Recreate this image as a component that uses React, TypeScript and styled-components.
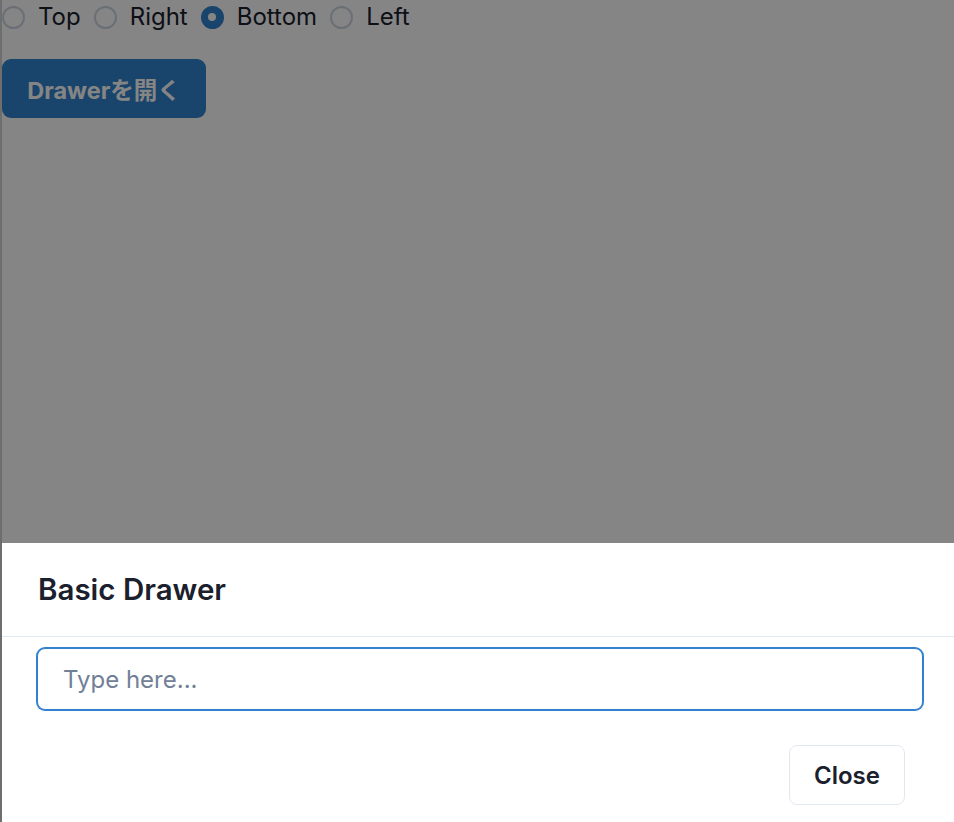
import React, { useState, useEffect, useRef } from "react";
import styled, { createGlobalStyle } from "styled-components";

const Global = createGlobalStyle`
  html, body { margin: 0; padding: 0; background: #ffffff; }
  body {
    font-family: Inter, "Noto Sans CJK JP", sans-serif;
    color: #1a202c;
    overflow: hidden;
  }
  * { box-sizing: border-box; }
`;

const Page = styled.div`
  padding-left: 2px;
`;

const RadioRow = styled.div`
  display: flex;
  align-items: center;
  gap: 13px;
  height: 34px;
`;

const RadioLabel = styled.label`
  display: flex;
  align-items: center;
  gap: 13px;
  font-size: 24px;
  line-height: 34px;
  cursor: pointer;
`;

const RadioCircle = styled.span<{ $checked: boolean }>`
  width: 23px;
  height: 23px;
  border-radius: 50%;
  flex-shrink: 0;
  border: 2px solid ${(p) => (p.$checked ? "#3182ce" : "#cbd5e0")};
  background: ${(p) => (p.$checked ? "#3182ce" : "#ffffff")};
  display: flex;
  align-items: center;
  justify-content: center;
  &::after {
    content: "";
    display: ${(p) => (p.$checked ? "block" : "none")};
    width: 8px;
    height: 8px;
    border-radius: 50%;
    background: #ffffff;
  }
`;

const OpenButton = styled.button`
  margin-top: 25px;
  height: 59px;
  width: 204px;
  border: none;
  border-radius: 9px;
  background: #3182ce;
  color: #ffffff;
  font-family: Inter, "Noto Sans CJK JP", sans-serif;
  font-weight: 700;
  font-size: 23.5px;
  display: flex;
  align-items: center;
  justify-content: center;
  cursor: pointer;
`;

const Overlay = styled.div`
  position: fixed;
  inset: 0;
  background: rgba(0, 0, 0, 0.48);
`;

const Drawer = styled.div`
  position: fixed;
  left: 2px;
  right: 0;
  bottom: 0;
  background: #ffffff;
  display: flex;
  flex-direction: column;
`;

const Header = styled.div`
  padding: 26px 35px 27px 36px;
  border-bottom: 1px solid #e2e8f0;
  font-size: 29.5px;
  font-weight: 600;
  line-height: 40px;
  color: #1a202c;
`;

const Body = styled.div`
  padding: 11px 31px 0 35px;
`;

const Input = styled.input`
  width: 100%;
  height: 62px;
  border: 1.5px solid #3182ce;
  box-shadow: 0 0 0 1px #3182ce;
  border-radius: 8px;
  padding: 0 25px;
  font-family: Inter, "Noto Sans CJK JP", sans-serif;
  font-size: 24px;
  color: #1a202c;
  outline: none;
  &::placeholder { color: #718096; }
`;

const Footer = styled.div`
  display: flex;
  justify-content: flex-end;
  padding: 35px 49px 17px 35px;
`;

const CloseButton = styled.button`
  width: 116px;
  height: 60px;
  border: 1px solid #e2e8f0;
  border-radius: 8px;
  background: #ffffff;
  color: #1a202c;
  font-family: Inter, sans-serif;
  font-weight: 600;
  font-size: 24px;
  cursor: pointer;
`;

const EdgeStrip = styled.div`
  position: fixed;
  left: 0;
  top: 0;
  bottom: 0;
  width: 2px;
  background: #6e6e6e;
  z-index: 10;
`;

const options = ["Top", "Right", "Bottom", "Left"];

export default function App() {
  const [placement, setPlacement] = useState("Bottom");
  const [open, setOpen] = useState(true);
  const inputRef = useRef<HTMLInputElement>(null);

  useEffect(() => {
    if (open) inputRef.current?.focus();
  }, [open]);

  return (
    <>
      <Global />
      <Page>
        <RadioRow>
          {options.map((o) => (
            <RadioLabel key={o} onClick={() => setPlacement(o)}>
              <RadioCircle $checked={placement === o} />
              {o}
            </RadioLabel>
          ))}
        </RadioRow>
        <OpenButton onClick={() => setOpen(true)}>Drawerを開く</OpenButton>
      </Page>
      {open && (
        <>
          <Overlay onClick={() => setOpen(false)} />
          <Drawer>
            <Header>Basic Drawer</Header>
            <Body>
              <Input ref={inputRef} placeholder="Type here..." />
            </Body>
            <Footer>
              <CloseButton onClick={() => setOpen(false)}>Close</CloseButton>
            </Footer>
          </Drawer>
        </>
      )}
      <EdgeStrip />
    </>
  );
}
